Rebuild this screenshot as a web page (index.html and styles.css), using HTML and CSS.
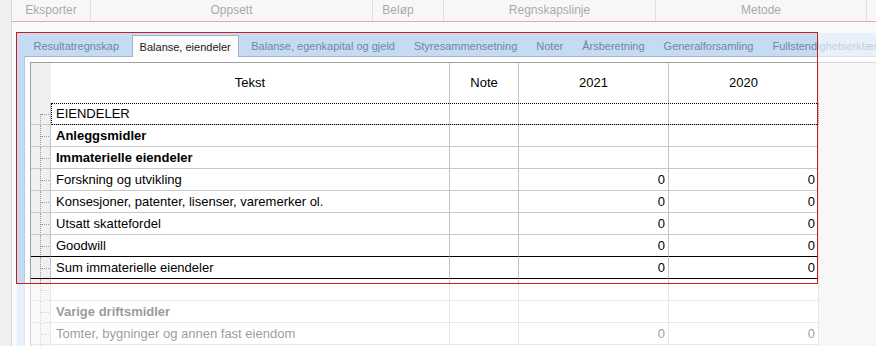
FILE: index.html
```html
<!DOCTYPE html>
<html lang="no">
<head>
    <meta charset="UTF-8">
    <title>Årsoppgjør - Balanse</title>
    <link rel="stylesheet" href="styles.css">
</head>
<body>
    <div class="app">
        <div class="side"></div>
        <div class="main">
            <div class="topbar">
                <div class="tcell c-eks">Eksporter</div>
                <div class="tcell c-opp">Oppsett</div>
                <div class="tcell c-bel">Beløp</div>
                <div class="tcell c-reg">Regnskapslinje</div>
                <div class="tcell c-met">Metode</div>
                <div class="tcell c-rest"></div>
            </div>

            <div class="tabctl">
                <div class="tabs">
                    <div class="tab">Resultatregnskap</div>
                    <div class="tab active">Balanse, eiendeler</div>
                    <div class="tab">Balanse, egenkapital og gjeld</div>
                    <div class="tab">Styresammensetning</div>
                    <div class="tab">Noter</div>
                    <div class="tab">Årsberetning</div>
                    <div class="tab">Generalforsamling</div>
                    <div class="tab">Fullstendighetserklæring</div>
                </div>
                <div class="panel">
                    <div class="grid">
                        <div class="row head">
                            <div class="rh"></div>
                            <div class="cell center">Tekst</div>
                            <div class="cell center">Note</div>
                            <div class="cell center">2021</div>
                            <div class="cell center">2020</div>
                        </div>
                        <div class="row focus">
                            <div class="rh first"></div>
                            <div class="cell">EIENDELER</div>
                            <div class="cell"></div>
                            <div class="cell num"></div>
                            <div class="cell num"></div>
                        </div>
                        <div class="row">
                            <div class="rh"></div>
                            <div class="cell bold">Anleggsmidler</div>
                            <div class="cell"></div>
                            <div class="cell num"></div>
                            <div class="cell num"></div>
                        </div>
                        <div class="row">
                            <div class="rh"></div>
                            <div class="cell bold">Immaterielle eiendeler</div>
                            <div class="cell"></div>
                            <div class="cell num"></div>
                            <div class="cell num"></div>
                        </div>
                        <div class="row">
                            <div class="rh"></div>
                            <div class="cell">Forskning og utvikling</div>
                            <div class="cell"></div>
                            <div class="cell num">0</div>
                            <div class="cell num">0</div>
                        </div>
                        <div class="row">
                            <div class="rh"></div>
                            <div class="cell">Konsesjoner, patenter, lisenser, varemerker ol.</div>
                            <div class="cell"></div>
                            <div class="cell num">0</div>
                            <div class="cell num">0</div>
                        </div>
                        <div class="row">
                            <div class="rh"></div>
                            <div class="cell">Utsatt skattefordel</div>
                            <div class="cell"></div>
                            <div class="cell num">0</div>
                            <div class="cell num">0</div>
                        </div>
                        <div class="row before-sum">
                            <div class="rh"></div>
                            <div class="cell">Goodwill</div>
                            <div class="cell"></div>
                            <div class="cell num">0</div>
                            <div class="cell num">0</div>
                        </div>
                        <div class="row sum">
                            <div class="rh"></div>
                            <div class="cell">Sum immaterielle eiendeler</div>
                            <div class="cell"></div>
                            <div class="cell num">0</div>
                            <div class="cell num">0</div>
                        </div>
                        <div class="row">
                            <div class="rh"></div>
                            <div class="cell"></div>
                            <div class="cell"></div>
                            <div class="cell num"></div>
                            <div class="cell num"></div>
                        </div>
                        <div class="row">
                            <div class="rh"></div>
                            <div class="cell bold">Varige driftsmidler</div>
                            <div class="cell"></div>
                            <div class="cell num"></div>
                            <div class="cell num"></div>
                        </div>
                        <div class="row">
                            <div class="rh"></div>
                            <div class="cell">Tomter, bygninger og annen fast eiendom</div>
                            <div class="cell"></div>
                            <div class="cell num">0</div>
                            <div class="cell num">0</div>
                        </div>
                        <div class="row">
                            <div class="rh"></div>
                            <div class="cell"></div>
                            <div class="cell"></div>
                            <div class="cell num"></div>
                            <div class="cell num"></div>
                        </div>
                    </div>
                </div>
            </div>
        </div>

        <!-- markering av området som vises -->
        <div class="spot"></div>
    </div>
</body>
</html>
```

FILE: styles.css
```css
body {
    margin: 0;
    font-family: 'Liberation Sans', Arial, sans-serif;
    background-color: #f0f0f0;
    overflow: hidden;
}

.app {
    position: relative;
    display: flex;
    width: 876px;
    height: 346px;
    overflow: hidden;
}

.side {
    width: 11px;
    flex: none;
    background-color: #d6d6d6;
    border-right: 1px solid #9c9c9c;
}

.main {
    flex: 1;
    min-width: 0;
    display: flex;
    flex-direction: column;
}

/* verktøylinje øverst */
.topbar {
    display: flex;
    height: 21px;
    background-color: #ececec;
    border-bottom: 1px solid #c22a2a;
    flex: none;
}

.tcell {
    box-sizing: border-box;
    border-right: 1px solid #b4b4b4;
    font-size: 12px;
    color: #1e1e1e;
    text-align: center;
    line-height: 21px;
    white-space: nowrap;
}

.c-eks { width: 79px; }
.c-opp { width: 282px; }
.c-bel { width: 71px; padding-right: 20px; }
.c-reg { width: 212px; }
.c-met { width: 211px; }
.c-rest { flex: 1; border-right: none; }

/* fanekontroll */
.tabctl {
    flex: 1;
    margin: 11px 0 0 5px;
    background-color: #c5dbf4;
    display: flex;
    flex-direction: column;
    min-height: 0;
}

.tabs {
    display: flex;
    height: 23px;
    padding-left: 7px;
    align-items: flex-end;
    flex: none;
    white-space: nowrap;
}

.tab {
    font-size: 11px;
    color: #7186a4;
    padding: 0 9.5px;
    height: 21px;
    line-height: 22px;
    box-sizing: border-box;
}

.tab.active {
    background-color: #fbfbfb;
    color: #1a1a1a;
    border: 1px solid #9fb6d3;
    border-bottom: none;
    height: 22px;
    margin: 0 3px 0 3px;
    margin-bottom: -1px;
    padding: 0 7px;
    position: relative;
    z-index: 1;
}

.panel {
    flex: 1;
    margin-left: 7px;
    background-color: #ffffff;
    border-top: 1px solid #9db5d4;
    border-left: 1px solid #b4c9e3;
    padding: 5px 0 0 5px;
    min-height: 0;
}

/* rutenett */
.grid {
    background-color: #ebebeb;
    border-top: 1px solid #a0a0a0;
    border-left: 1px solid #a0a0a0;
    height: 100%;
}

.row {
    display: grid;
    grid-template-columns: 20px 399px 69px 150px 150px;
    height: 22px;
    position: relative;
    background-color: #ffffff;
    width: 788px;
}

.row .cell,
.row .rh {
    box-sizing: border-box;
    border-right: 1px solid #c4c4c4;
    border-bottom: 1px solid #c8c8c8;
    font-size: 13px;
    color: #000;
    line-height: 21px;
    padding: 0 5px;
    white-space: nowrap;
    overflow: hidden;
}

.row .rh {
    background-color: #f0f0f0;
    position: relative;
    padding: 0;
}

/* trelinjer i radhodet */
.row .rh::before {
    content: "";
    position: absolute;
    left: 9px;
    top: 0;
    bottom: -1px;
    border-left: 1px dotted #9a9a9a;
}

.row .rh::after {
    content: "";
    position: absolute;
    left: 10px;
    width: 8px;
    top: 11px;
    border-top: 1px dotted #9a9a9a;
}

.row .rh.first::before {
    top: 11px;
}

.row.head {
    height: 40px;
}

.row.head .cell,
.row.head .rh {
    line-height: 40px;
    border-bottom: none;
}

.row.head .rh {
    border-right: none;
}

.row.head .rh::before,
.row.head .rh::after {
    display: none;
}

.center {
    text-align: center;
}

.num {
    text-align: right;
}

.row .cell.num {
    padding-right: 3px;
}

.bold {
    font-weight: bold;
}

.row.focus::after {
    content: "";
    position: absolute;
    left: 20px;
    right: 0;
    top: 0;
    bottom: 0;
    border: 1px dotted #000;
    pointer-events: none;
}

.row.before-sum .cell,
.row.before-sum .rh,
.row.sum .cell,
.row.sum .rh {
    border-bottom-color: #000;
}

/* utheving med rød ramme, resten tones ned */
.spot {
    position: absolute;
    left: 16px;
    top: 32px;
    width: 802px;
    height: 252px;
    box-sizing: border-box;
    border: 1px solid #cc1c1c;
    box-shadow: 0 0 0 1200px rgba(255, 255, 255, 0.6);
    pointer-events: none;
}
```
